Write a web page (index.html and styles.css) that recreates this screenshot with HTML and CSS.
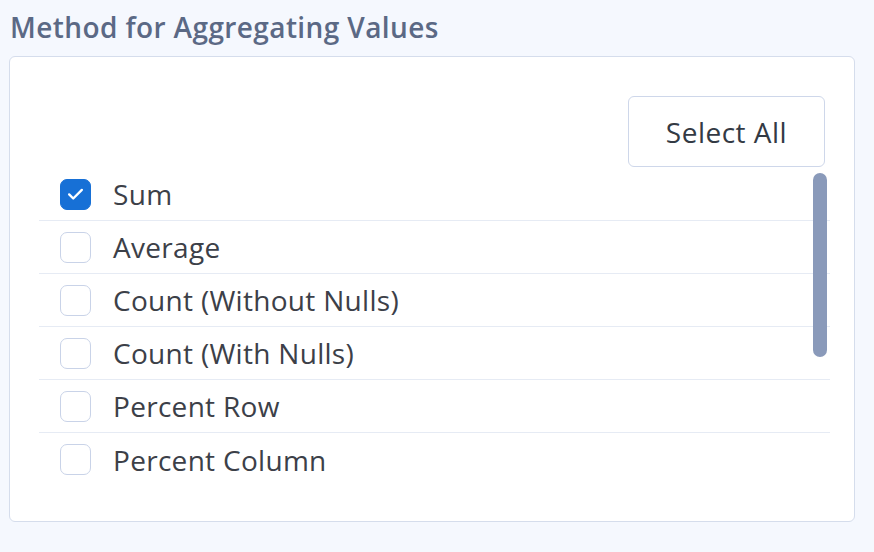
FILE: index.html
```html
<!DOCTYPE html>
<html>
<head>
<meta charset="utf-8">
<link rel="stylesheet" href="styles.css">
</head>
<body>
<div class="title">Method for Aggregating Values</div>
<div class="card">
  <div class="toolbar"><button class="btn">Select All</button></div>
  <div class="list">
    <div class="row"><span class="cb checked"><svg viewBox="0 0 32 32" width="32" height="32"><path d="M9 16.5l4.5 4.5L23 11.5" fill="none" stroke="#fff" stroke-width="2.6" stroke-linecap="round" stroke-linejoin="round"/></svg></span><span class="lbl">Sum</span></div>
    <div class="row"><span class="cb"></span><span class="lbl">Average</span></div>
    <div class="row"><span class="cb"></span><span class="lbl">Count (Without Nulls)</span></div>
    <div class="row"><span class="cb"></span><span class="lbl">Count (With Nulls)</span></div>
    <div class="row"><span class="cb"></span><span class="lbl">Percent Row</span></div>
    <div class="row last"><span class="cb"></span><span class="lbl">Percent Column</span></div>
    <div class="thumb"></div>
  </div>
</div>
</body>
</html>
```
FILE: styles.css
```css
html, body { margin: 0; padding: 0; }
body {
  background: #f5f8fe;
  font-family: "Open Sans", "Noto Sans", sans-serif;
  width: 874px;
  height: 552px;
  overflow: hidden;
}
.title {
  color: #5b6985;
  font-size: 28px;
  font-weight: 600;
  line-height: 32px;
  padding: 11px 0 0 10px;
  height: 46px;
  box-sizing: border-box;
  letter-spacing: 0.4px;
}
.card {
  margin-left: 9px;
  margin-top: 10px;
  width: 846px;
  height: 466px;
  box-sizing: border-box;
  background: #fff;
  border: 1.5px solid #d5ddec;
  border-radius: 6px;
  padding: 39px 29px 0 29px;
}
.toolbar {
  display: flex;
  justify-content: flex-end;
  height: 72px;
}
.btn {
  width: 197px;
  height: 71px;
  box-sizing: border-box;
  background: #fff;
  border: 1.5px solid #ced7ea;
  border-radius: 6px;
  font-family: "Open Sans", "Noto Sans", sans-serif;
  font-size: 28px;
  color: #333a44;
  letter-spacing: 0.5px;
  padding: 0;
}
.list {
  position: relative;
  margin-right: -5px;
}
.row {
  height: 53px;
  box-sizing: border-box;
  border-bottom: 1.5px solid #e6ebf4;
  display: flex;
  align-items: center;
  padding-left: 21px;
}
.row.last { border-bottom: none; }
.cb {
  width: 31px;
  height: 31px;
  box-sizing: border-box;
  border: 1.5px solid #c9d3e8;
  border-radius: 7px;
  background: #fff;
  display: flex;
  align-items: center;
  justify-content: center;
  flex: none;
}
.cb svg { display: block; }
.cb.checked {
  background: #1770d6;
  border-color: #1770d6;
}
.lbl {
  margin-left: 22px;
  font-size: 28px;
  color: #3c4048;
  letter-spacing: 0.3px;
}
.thumb {
  position: absolute;
  left: 774px;
  top: 5px;
  width: 14px;
  height: 184px;
  border-radius: 7px;
  background: #8a9aba;
}
```
